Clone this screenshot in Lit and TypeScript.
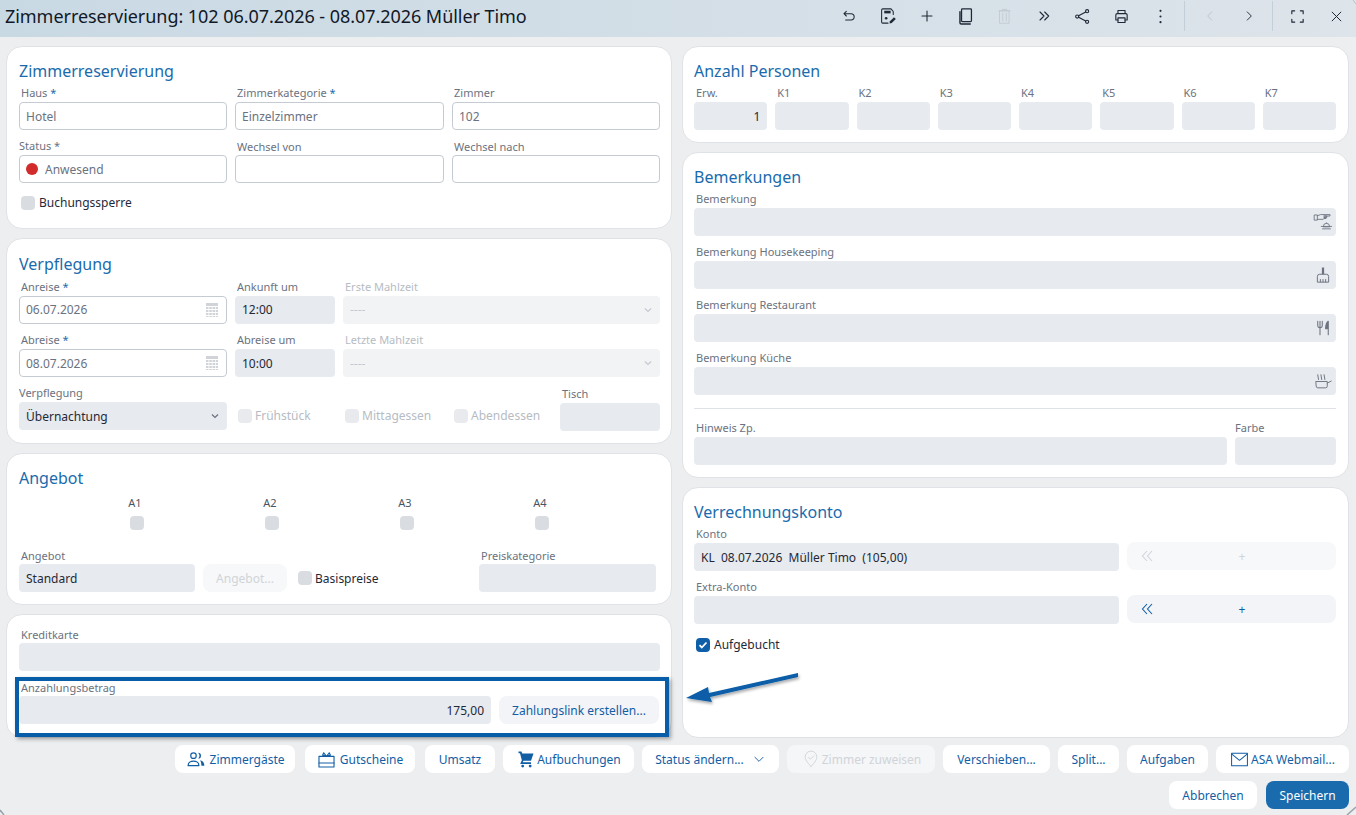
import { LitElement, html, css, svg, TemplateResult } from 'lit';
import { customElement } from 'lit/decorators.js';

const ic = (w: number, body: unknown) =>
  html`<svg class="ic" width=${w} height=${w} viewBox="0 0 24 24" fill="none" stroke="currentColor" stroke-width="1.6" stroke-linecap="round" stroke-linejoin="round">${body}</svg>`;

const toolbar: [number, unknown][] = [
  [16, svg`<path d="M8 5 4.500 8.500 8 12M5 8.500h10a4.700 4.700 0 0 1 0 9.500H7"/>`],
  [18, svg`<path stroke-width="1.400" d="M19 10V6l-3-3.500H5A1.500 1.500 0 0 0 3.500 4v16A1.500 1.500 0 0 0 5 21.500h7"/><path d="M7 5h8.500v3.500H7z" fill="currentColor" stroke="none"/><circle cx="9.500" cy="15" r="1.800" fill="currentColor" stroke="none"/><path d="m14 22 .6-3 5.400-5.400 2.400 2.400-5.400 5.400z" fill="currentColor" stroke="none"/>`],
  [16, svg`<path d="M12 4.500v15M4.500 12h15"/>`],
  [19, svg`<rect x="7" y="2.500" width="12.500" height="16" rx="1"/><path d="M5 6v14a1.500 1.500 0 0 0 1.500 1.500H18" stroke-width="1.800"/>`],
  [17, svg`<path stroke-width="1.200" d="M5.500 4h13v17.500h-13zM9.500 7.500v10.500M14.500 7.500v10.500M4 4h16M9 2h6"/>`],
  [16, svg`<path d="m6 6 6 6-6 6M13 6l6 6-6 6"/>`],
  [17, svg`<circle cx="18.500" cy="4.500" r="2.200"/><circle cx="18.500" cy="19.500" r="2.200"/><circle cx="4.500" cy="12" r="2.200"/><path d="m6.500 11 10-5.500M6.500 13l10 5.500"/>`],
  [17, svg`<path d="M7 8V3.500h10V8M7 17H4V10a2 2 0 0 1 2-2h12a2 2 0 0 1 2 2v7h-3"/><path d="M7 14h10v6.500H7z"/>`],
  [17, svg`<g fill="currentColor" stroke="none"><circle cx="12" cy="4" r="1.500"/><circle cx="12" cy="12" r="1.500"/><circle cx="12" cy="20" r="1.500"/></g>`],
];

@customElement('app-root')
export class AppRoot extends LitElement {
  static styles = css`
    :host {
      display: block;
      width: 1356px;
      height: 815px;
      overflow: hidden;
      position: relative;
      background: #eceef0;
      font-family: 'Noto Sans', 'Open Sans', sans-serif;
      font-size: 12px;
      color: #1f2937;
    }
    * { box-sizing: border-box; }
    .titlebar {
      height: 37px;
      display: flex;
      align-items: center;
      padding: 0 0 5px 5px;
      background: linear-gradient(90deg, #c9d9e4, #dde4ea);
    }
    .titlebar h1 {
      flex: 1;
      margin: 0;
      padding-bottom: 1px;
      font-size: 18px;
      font-weight: 400;
      letter-spacing: -0.05px;
      color: #111827;
    }
    .tools { display: flex; align-items: center; }
    .tool { width: 39px; display: flex; justify-content: center; color: #1f2937; }
    .tool.dim { color: #b9c2cb; }
    .tool.trash { color: #c0c8d0; }
    .vsep { width: 1px; height: 30px; background: #c3ced7; margin: 0 5px 0 4px; }
    .ic { display: block; flex: none; }
    .main {
      display: grid;
      grid-template-columns: 666px 667px;
      gap: 10px;
      padding: 9px 7px 0 6px;
      height: 700px;
    }
    .col { display: flex; flex-direction: column; gap: 9px; }
    .col.right .card { padding-left: 11px; padding-right: 12px; }
    .card {
      background: #fff;
      border: 1px solid #dfe2e6;
      border-radius: 16px;
      padding: 12px 11px 0 12px;
    }
    .card h2 {
      margin: 0;
      height: 25px;
      line-height: 25px;
      font-size: 16px;
      font-weight: 400;
      color: #1a6bad;
    }
    .lbl {
      height: 18px;
      line-height: 18px;
      padding-left: 2px;
      color: #6b7280;
      font-size: 11px;
      white-space: nowrap;
    }
    .lbl.off { color: #b6bcc4; }
    .lbl.low { line-height: 20px; }
    .lbl.flush { padding-left: 0; }
    .lbl b { color: #1a6bad; font-weight: 400; }
    .inp {
      height: 28px;
      border-radius: 4px;
      background: #e7eaee;
      color: #1f2937;
      font-size: 12px;
      display: flex;
      align-items: center;
      padding: 0 7px;
      white-space: nowrap;
    }
    .inp.line { background: #fff; border: 1px solid #c5cbd2; color: #6b7280; padding-left: 6px; }
    .inp.off { background: #f2f3f5; color: #c4c9cf; }
    .inp.end { justify-content: flex-end; }
    .inp.between { justify-content: space-between; }
    .inp.icon { justify-content: flex-end; padding-right: 4px; }
    .inp .ic { color: #6b7280; }
    .inp .ic.cal { color: #d0d4d9; }
    .dot { width: 12px; height: 12px; border-radius: 50%; background: #d22b2b; margin-right: 7px; }
    .chk {
      display: flex;
      align-items: center;
      gap: 4px;
      font-size: 12px;
      color: #1f2937;
      white-space: nowrap;
    }
    .box { width: 14px; height: 14px; border-radius: 4px; background: #d9dde2; flex: none; }
    .chk.off { color: #b6bcc4; gap: 3px; }
    .chk.off .box { background: #e8eaed; }
    .box.on { background: #0f5ea8; display: flex; align-items: center; justify-content: center; }
    .g { display: grid; column-gap: 8px; row-gap: 7px; }
    .g3 { grid-template-columns: 208px 209px 208px; }
    .chk-row { margin: 11px 0 0 2px; }
    .card.vpf { padding-top: 13px; }
    .card.vpf h2 { margin-bottom: 0.5px; }
    .vp { grid-template-columns: 208px 100px 317px; row-gap: 7.5px; }
    .vp-last {
      display: grid;
      grid-template-columns: 208px 107px 109px 117px 100px;
      margin-top: 7px;
      align-items: end;
    }
    .vp-last .chk { height: 27px; padding-left: 11px; align-self: end; margin-bottom: 1px; }
    .vp-last .tisch { position: relative; top: 1px; }
    .offers { display: grid; grid-template-columns: repeat(4, 135px); margin: 4px 0 0 50px; }
    .offer { display: flex; flex-direction: column; align-items: center; gap: 5px; font-size: 11px; color: #4b5563; }
    .offer span { height: 16px; line-height: 16px; margin-right: 3px; }
    .ang {
      display: grid;
      grid-template-columns: 176px 84px 176px 177px;
      column-gap: 8px;
      margin-top: 16px;
      align-items: end;
    }
    .ang .chk { height: 28px; padding-left: 3px; gap: 3px; }
    .btn {
      height: 28px;
      border-radius: 8px;
      background: #f2f4f7;
      color: #125ea5;
      font-size: 12px;
      display: flex;
      align-items: center;
      justify-content: center;
      gap: 4px;
      white-space: nowrap;
    }
    .btn.off { color: #d0d4d9; background: #f7f8f9; }
    .card.pay { padding-top: 10px; }
    .dep { display: grid; grid-template-columns: 472px 160px; column-gap: 8px; align-items: end; }
    .highlight {
      position: absolute;
      left: 15px;
      top: 677px;
      width: 654px;
      height: 60px;
      border: 4px solid #075da8;
      box-shadow: 2px 2px 4px rgba(0, 0, 0, 0.35);
      pointer-events: none;
    }
    .arrow { position: absolute; left: 680px; top: 664px; pointer-events: none; }
    .corners { position: absolute; inset: 0; pointer-events: none; }
    .people { display: grid; grid-template-columns: repeat(8, 1fr); column-gap: 8px; }
    .stack { display: flex; flex-direction: column; gap: 7px; }
    .card hr { border: 0; border-top: 1px solid #dfe2e6; margin: 13px 0 10px; }
    .hint { display: grid; grid-template-columns: 533px 101px; column-gap: 8px; }
    .acct { display: grid; grid-template-columns: 425px 209px; column-gap: 8px; row-gap: 7px; align-items: end; }
    .pair {
      position: relative;
      top: -1px;
      display: grid;
      gap: 0;
      grid-template-columns: 40px 150px 1fr;
      justify-items: center;
      align-items: center;
    }
    .booked { margin: 12px 0 0 2px; }
    .actions { display: flex; justify-content: flex-end; padding: 8px 7px 0 0; gap: 8px; }
    .actions .btn { background: #fff; }
    .actions .btn.off { background: #f5f6f7; }
    .actions .btn.primary { background: #1a6bad; color: #fff; }
  `;

  private field(label: unknown, body: TemplateResult, cls = '') {
    return html`<div><div class="lbl ${cls}">${label}</div>${body}</div>`;
  }

  private calendar() {
    return html`<svg class="ic cal" width="14" height="16" viewBox="0 0 14 16"><path fill="currentColor" d="M1 1h12v3H1zM1 5h2.500v2H1zM4.300 5h2.500v2H4.300zM7.500 5H10v2H7.500zM10.700 5H13v2h-2.300zM1 8h2.500v2H1zM4.300 8h2.500v2H4.300zM7.500 8H10v2H7.500zM10.700 8H13v2h-2.300zM1 11h2.500v2H1zM4.300 11h2.500v2H4.300zM7.500 11H10v2H7.500zM10.700 11H13v2h-2.300zM1 14h2.500v1H1zM4.300 14h2.500v1H4.300zM7.500 14H10v1H7.500zM10.700 14H13v1h-2.300z"/></svg>`;
  }

  private chevron(color = '#6b7280') {
    return html`<svg class="ic" width="10" height="10" viewBox="0 0 10 10" fill="none" stroke=${color} stroke-width="1.200"><path d="m2 3.500 3 3 3-3"/></svg>`;
  }

  private chevrons() {
    return html`<svg class="ic" width="12" height="12" viewBox="0 0 12 12" fill="none" stroke="currentColor" stroke-width="1.100"><path d="M6 1 1.500 6 6 11M11 1 6.500 6 11 11"/></svg>`;
  }

  render() {
    const req = (t: string) => html`${t} <b>*</b>`;
    return html`
      <div class="titlebar">
        <h1>Zimmerreservierung: 102 06.07.2026 - 08.07.2026 Müller Timo</h1>
        <div class="tools">
          ${toolbar.map(([w, b], i) => html`<span class="tool ${i === 4 ? 'trash' : ''}">${ic(w, b)}</span>`)}
          <span class="vsep"></span>
          <span class="tool dim">${ic(14, svg`<path d="m15 5-7 7 7 7"/>`)}</span>
          <span class="tool">${ic(14, svg`<path d="m9 5 7 7-7 7"/>`)}</span>
          <span class="vsep"></span>
          <span class="tool">${ic(17, svg`<path d="M4 8V4h4M16 4h4v4M4 16v4h4M16 20h4v-4"/>`)}</span>
          <span class="tool">${ic(15, svg`<path d="m5 5 14 14M19 5 5 19"/>`)}</span>
        </div>
      </div>
      <div class="main">
        <div class="col">
          <section class="card" style="height:183px">
            <h2>Zimmerreservierung</h2>
            <div class="g g3">
              ${this.field(req('Haus'), html`<div class="inp line">Hotel</div>`)}
              ${this.field(req('Zimmerkategorie'), html`<div class="inp line">Einzelzimmer</div>`)}
              ${this.field('Zimmer', html`<div class="inp line">102</div>`)}
              ${this.field('Status *', html`<div class="inp line"><span class="dot"></span>Anwesend</div>`, 'flush')}
              ${this.field('Wechsel von', html`<div class="inp line"></div>`, 'low')}
              ${this.field('Wechsel nach', html`<div class="inp line"></div>`, 'low')}
            </div>
            <div class="chk chk-row"><span class="box"></span>Buchungssperre</div>
          </section>
          <section class="card vpf" style="height:206px">
            <h2>Verpflegung</h2>
            <div class="g vp">
              ${this.field(req('Anreise'), html`<div class="inp line between">06.07.2026${this.calendar()}</div>`)}
              ${this.field('Ankunft um', html`<div class="inp">12:00</div>`)}
              ${this.field('Erste Mahlzeit', html`<div class="inp off between">----${this.chevron('#c4c9cf')}</div>`, 'off')}
              ${this.field(req('Abreise'), html`<div class="inp line between">08.07.2026${this.calendar()}</div>`)}
              ${this.field('Abreise um', html`<div class="inp">10:00</div>`)}
              ${this.field('Letzte Mahlzeit', html`<div class="inp off between">----${this.chevron('#c4c9cf')}</div>`, 'off')}
            </div>
            <div class="vp-last">
              ${this.field('Verpflegung', html`<div class="inp between">Übernachtung${this.chevron()}</div>`, 'flush')}
              <div class="chk off"><span class="box"></span>Frühstück</div>
              <div class="chk off"><span class="box"></span>Mittagessen</div>
              <div class="chk off"><span class="box"></span>Abendessen</div>
              <div class="tisch">${this.field('Tisch', html`<div class="inp"></div>`)}</div>
            </div>
          </section>
          <section class="card" style="height:152px">
            <h2>Angebot</h2>
            <div class="offers">
              ${['A1', 'A2', 'A3', 'A4'].map((a) => html`<div class="offer"><span>${a}</span><i class="box"></i></div>`)}
            </div>
            <div class="ang">
              ${this.field('Angebot', html`<div class="inp">Standard</div>`, 'low')}
              <div class="btn off">Angebot...</div>
              <div class="chk"><span class="box"></span>Basispreise</div>
              ${this.field('Preiskategorie', html`<div class="inp"></div>`, 'low')}
            </div>
          </section>
          <section class="card pay" style="height:124px">
            <div class="stack">
              ${this.field('Kreditkarte', html`<div class="inp"></div>`, 'low')}
              <div class="dep">
                ${this.field('Anzahlungsbetrag', html`<div class="inp end">175,00</div>`, 'low')}
                <div class="btn">Zahlungslink erstellen...</div>
              </div>
            </div>
          </section>
        </div>
        <div class="col right">
          <section class="card" style="height:97px">
            <h2>Anzahl Personen</h2>
            <div class="people">
              ${this.field('Erw.', html`<div class="inp end">1</div>`)}
              ${['K1', 'K2', 'K3', 'K4', 'K5', 'K6', 'K7'].map((k) => this.field(k, html`<div class="inp"></div>`))}
            </div>
          </section>
          <section class="card" style="height:326px">
            <h2>Bemerkungen</h2>
            <div class="stack">
              ${this.field('Bemerkung', html`<div class="inp icon">${ic(19, svg`<path stroke-width="1.100" d="M2 2.500h3.500v6.500H2zM5.500 3.500l4-1.500h12v1.800H14M14 3.800h3.500v1.700H14M14 5.500h2.500V7H14M5.500 8h7.500l1-1M17 12.500v.5M13 17a4 4 0 0 1 8 0zM10.500 17h13M12 20h10"/>`)}</div>`)}
              ${this.field('Bemerkung Housekeeping', html`<div class="inp icon">${ic(18, svg`<path fill="currentColor" stroke="none" d="M10.500 2h3v9h-3z"/><path stroke-width="1.300" d="M4.500 21v-7a3 3 0 0 1 3-3h9a3 3 0 0 1 3 3v7zM8.500 21v-3M12 21v-3M15.500 21v-3"/>`)}</div>`)}
              ${this.field('Bemerkung Restaurant', html`<div class="inp icon">${ic(18, svg`<path stroke-width="1.400" d="M5 3v6a2.500 2.500 0 0 0 2.500 2.500h1A2.500 2.500 0 0 0 11 9V3M8 3v18"/><path fill="currentColor" stroke-width="1.400" d="M19 3v18M19 3c-2.500 2-3.500 6-3.500 10H19z"/>`)}</div>`)}
              ${this.field('Bemerkung Küche', html`<div class="inp icon">${ic(19, svg`<path stroke-width="1.200" d="M4 12h14v6a2 2 0 0 1-2 2H6a2 2 0 0 1-2-2zM18 14l5-2.500M6 3.500l1 6M10 3.500l1 6M14 3.500l1 6"/>`)}</div>`)}
            </div>
            <hr />
            <div class="hint">
              ${this.field('Hinweis Zp.', html`<div class="inp"></div>`)}
              ${this.field('Farbe', html`<div class="inp"></div>`, 'flush')}
            </div>
          </section>
          <section class="card" style="height:251px">
            <h2>Verrechnungskonto</h2>
            <div class="acct">
              ${this.field('Konto', html`<div class="inp">KL&nbsp; 08.07.2026&nbsp; Müller Timo&nbsp; (105,00)</div>`)}
              <div class="btn off pair">${this.chevrons()}<span>+</span><span></span></div>
              ${this.field('Extra-Konto', html`<div class="inp"></div>`)}
              <div class="btn pair">${this.chevrons()}<span>+</span><span></span></div>
            </div>
            <div class="chk booked">
              <span class="box on"><svg width="10" height="10" viewBox="0 0 10 10" fill="none" stroke="#fff" stroke-width="1.800"><path d="m1.500 5.200 2.300 2.300 4.700-5"/></svg></span>Aufgebucht
            </div>
          </section>
        </div>
      </div>
      <div class="actions">
        <div class="btn" style="width:120px;margin-right:2px">${ic(20, svg`<circle cx="9" cy="8" r="3.300" stroke-width="1.400"/><path stroke-width="1.400" d="M2.500 20c0-3.500 3-5.500 6.500-5.500s6.500 2 6.500 5.500z"/><path fill="currentColor" stroke="none" d="M14.500 4.500a3.500 3.500 0 0 1 0 7 5 5 0 0 0 0-7zM17 13.500c3 .5 5 3 5 6.500h-3.500c0-2.500-.5-4.500-1.500-6.500z"/>`)}Zimmergäste</div>
        <div class="btn" style="width:110px;margin-right:2px">${ic(19, svg`<rect x="2.500" y="8" width="19" height="13.500" stroke-width="1.400"/><path stroke-width="1.400" d="M2.500 16.500h19M12 8 8.500 3.500 7 6.500l5 1.500zM12 8l3.500-4.500L17 6.500 12 8z"/>`)}Gutscheine</div>
        <div class="btn" style="width:70px">Umsatz</div>
        <div class="btn" style="width:131px;gap:1px">${ic(20, svg`<path fill="currentColor" stroke="none" d="M3 3h3.500l1 2.500H21l-3 8.500H9L8 16h10v2H5l2-4.500L4.800 5H3z"/><circle cx="8" cy="20.500" r="1.700" fill="currentColor" stroke="none"/><circle cx="17" cy="20.500" r="1.700" fill="currentColor" stroke="none"/>`)}Aufbuchungen</div>
        <div class="btn" style="width:137px;gap:8px">Status ändern...${ic(14, svg`<path d="m5 9 7 7 7-7"/>`)}</div>
        <div class="btn off" style="width:148px;gap:1px">${ic(20, svg`<path stroke-width="1.100" d="M12 21c-5-5.500-7-8.500-7-11.500a7 7 0 0 1 14 0c0 3-2 6-7 11.500zM9 10l2.300 2.300L15.500 8"/>`)}Zimmer zuweisen</div>
        <div class="btn" style="width:107px">Verschieben...</div>
        <div class="btn" style="width:61px">Split...</div>
        <div class="btn" style="width:81px">Aufgaben</div>
        <div class="btn" style="width:133px;gap:2px">${ic(19, svg`<rect x="2" y="4" width="20" height="16" stroke-width="1.300"/><path stroke-width="1.300" d="m2 5 10 8 10-8"/>`)}ASA Webmail...</div>
      </div>
      <div class="actions">
        <div class="btn" style="width:88px;margin-right:1px">Abbrechen</div>
        <div class="btn primary" style="width:83px">Speichern</div>
      </div>
      <div class="highlight"></div>
      <svg class="arrow" width="130" height="50" viewBox="0 0 130 50">
        <defs><filter id="s" x="-20%" y="-30%" width="140%" height="180%"><feDropShadow dx="1" dy="2" stdDeviation="1.500" flood-color="#000" flood-opacity=".35"/></filter></defs>
        <path filter="url(#s)" fill="#075da8" d="M6 34 28 23 29 29 118 9 118 13 30 33 32 38z"/>
      </svg>
      <svg class="corners" width="1356" height="815" viewBox="0 0 1356 815" fill="none">
        <path stroke="#9aa3ab" stroke-width="1.500" d="M1347 815 1356 807"/>
        <path stroke="#b8c2ca" d="M1353 0 1356 4"/>
        <path stroke="#9aa3ab" stroke-width="1.500" d="M0 810 4 815"/>
      </svg>
    `;
  }
}
